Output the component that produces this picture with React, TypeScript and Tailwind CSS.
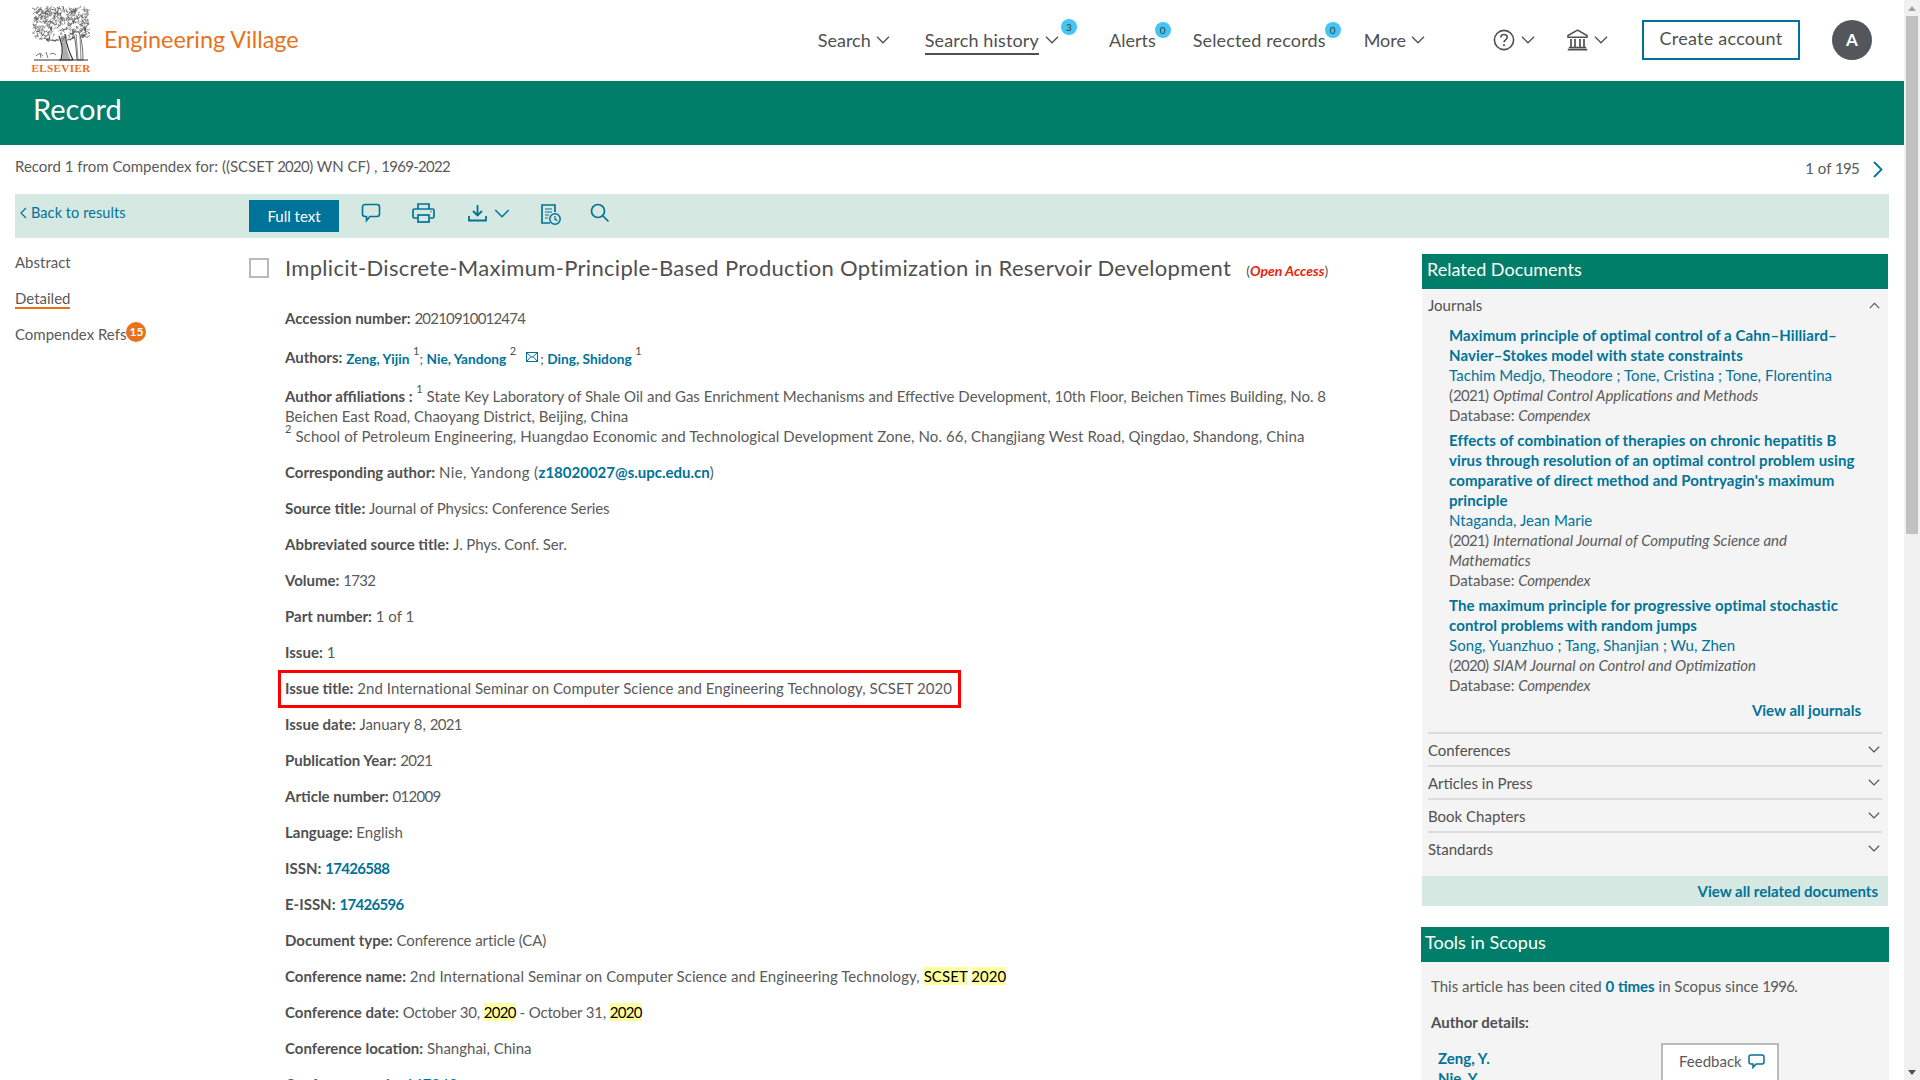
import React from "react";

const F = { fontFamily: '"Lato","Noto Sans",sans-serif' };

function rng(seed: number) {
  let s = seed;
  return () => {
    s = (s * 16807) % 2147483647;
    return s / 2147483647;
  };
}

function crownPath() {
  const r = rng(4242);
  let d = "";
  for (let i = 0; i < 430; i++) {
    const x = 1 + r() * 56;
    const y = 1 + r() * 33;
    const dx = (x - 29) / 29;
    const dy = (y - 17) / 18;
    if (dx * dx * dx * dx + dy * dy * dy * dy > 1) continue;
    if (y > 24 && x > 18 && x < 38 && r() < 0.6) continue;
    const a = r() * 6.28;
    const l = 1.2 + r() * 1.6;
    const cx = x + Math.cos(a + 1) * l;
    const cy = y + Math.sin(a + 1) * l;
    d += `M${x.toFixed(1)} ${y.toFixed(1)}Q${cx.toFixed(1)} ${cy.toFixed(1)} ${(x + Math.cos(a) * l * 1.5).toFixed(1)} ${(y + Math.sin(a) * l * 1.5).toFixed(1)}`;
  }
  return d;
}
const CROWN = crownPath();

function Logo() {
  return (
    <svg width="58" height="56" viewBox="0 0 58 56" className="block">
      <path d={CROWN} fill="none" stroke="#4a4a4a" strokeWidth="0.6" />
      <path d="M27 30c2 6 5 12 2 24M33 28c1 8 2 14 8 26M27 54h14" fill="none" stroke="#333" strokeWidth="1.2" />
      <path d="M29 30c1 8 2 16 1 24h9c-4-8-5-16-5-25z" fill="#6a6a6a" opacity="0.55" />
      <path d="M12 32c4 2 8 3 15 2M44 30c-3 2-6 4-9 4" fill="none" stroke="#444" strokeWidth="0.9" />
      <path d="M41 26c3 8 3 18 4 28h6c0-10-1-20-4-28z" fill="#fff" stroke="#444" strokeWidth="0.8" />
      <path d="M36 30l7-4M44 28l2 26M48 30l1 24" fill="none" stroke="#555" strokeWidth="0.7" />
      <path d="M4 50c3-3 5-3 7 0M14 46l2 6M8 47l1 5M18 48c2-1 4-1 6 1" fill="none" stroke="#555" strokeWidth="0.8" />
      <path d="M2 54h54" stroke="#333" strokeWidth="1.1" />
    </svg>
  );
}

function Chev({ w = 14, h = 8, c = "#505050", up = false }: { w?: number; h?: number; c?: string; up?: boolean }) {
  return (
    <svg width={w} height={h} viewBox="0 0 14 8" fill="none" className="block shrink-0">
      <path d={up ? "M1 7.2 7 1.2l6 6" : "M1 .8l6 6 6-6"} stroke={c} strokeWidth="1.3" />
    </svg>
  );
}

function Badge({ n, cls }: { n: string; cls: string }) {
  return (
    <span className={`absolute w-4 h-4 rounded-full bg-[#44c6f4] text-[#3a3a3a] text-[10px] leading-4 text-center tracking-normal ${cls}`}>
      {n}
    </span>
  );
}

const K = ({ children }: { children: React.ReactNode }) => <span className="font-bold text-[#505050]">{children}</span>;
const L = ({ children, b = true }: { children: React.ReactNode; b?: boolean }) => (
  <span className={`text-[#007398] ${b ? "font-bold" : ""}`}>{children}</span>
);
const N = ({ children }: { children: React.ReactNode }) => <span className="tracking-[-0.7px]">{children}</span>;
const Y = ({ children }: { children: React.ReactNode }) => <span className="bg-[#ffff9f] text-black">{children}</span>;
const Sup = ({ children }: { children: React.ReactNode }) => (
  <sup className="text-[11px] leading-none align-[4px] font-normal text-[#505050]">{children}</sup>
);

function Row({ k, children, cls = "" }: { k: string; children?: React.ReactNode; cls?: string }) {
  return (
    <div className={`mb-4 ${cls}`}>
      <K>{k}</K> {children}
    </div>
  );
}

function Ref({ title, authors, year, src }: { title: string[]; authors: string[]; year: string; src: string[] }) {
  return (
    <div className="mb-[5px]">
      <div className="font-bold text-[#007398] tracking-[0.1px]">
        {title.map((t) => (
          <div key={t}>{t}</div>
        ))}
      </div>
      <div className="text-[#007398] tracking-[0.06px]">{authors.join(" ; ")}</div>
      <div>
        (<N>{year}</N>) <i>{src[0]}</i>
      </div>
      {src[1] && (
        <div>
          <i>{src[1]}</i>
        </div>
      )}
      <div>
        Database: <i className="tracking-[-0.2px]">Compendex</i>
      </div>
    </div>
  );
}

function Section({ t }: { t: string }) {
  return (
    <div className="h-[33px] border-t-2 border-[#dcdcdc] flex items-center justify-between pr-[2px] text-[#505050]">
      <span>{t}</span>
      <Chev w={12} h={7} />
    </div>
  );
}

export default function App() {
  return (
    <div className="h-screen overflow-hidden flex bg-white text-[#5a5a5a] text-[15px] leading-5" style={F}>
      <div className="w-[1904px] shrink-0 relative">
        {/* header */}
        <header className="h-[81px] flex items-center">
          <div className="ml-8 flex flex-col items-center w-[58px] -mt-[1px]">
            <Logo />
            <span className="text-[#e9711c] text-[11px] leading-[11px] font-bold tracking-[0.45px] mt-[1px]" style={{ fontFamily: '"Liberation Serif",serif' }}>
              ELSEVIER
            </span>
          </div>
          <span className="ml-[14px] text-[#e9711c] text-[23.4px] leading-none -mt-[2px]">Engineering Village</span>
          <nav className="ml-auto flex items-center text-[18px] text-[#505050] h-full relative pr-[32px] pb-[1px]">
            <div className="flex items-center gap-[5px]">
              <span>Search</span>
              <Chev />
            </div>
            <div className="ml-[35px] flex items-center gap-[6px] relative">
              <span className="relative tracking-[0.15px]">
                Search history
                <span className="absolute left-0 right-0 -bottom-[5px] h-[2px] bg-[#505050]" />
              </span>
              <Chev />
              <Badge n="3" cls="-right-[18px] -top-[11px]" />
            </div>
            <div className="ml-[50px] relative">
              Alerts
              <Badge n="0" cls="-right-[15px] -top-[8px]" />
            </div>
            <div className="ml-[37px] relative tracking-[0.15px]">
              Selected records
              <Badge n="0" cls="-right-[15px] -top-[8px]" />
            </div>
            <div className="ml-[38px] flex items-center gap-[5px]">
              <span>More</span>
              <Chev />
            </div>
            <div className="ml-[68px] flex items-center gap-[6px]">
              <svg width="22" height="22" viewBox="0 0 22 22" fill="none" stroke="#505050" strokeWidth="1.6">
                <circle cx="11" cy="11" r="9.6" />
                <path d="M7.8 8.5c0-1.9 1.4-3 3.2-3s3.2 1.1 3.2 2.8c0 2.6-3.2 2.5-3.2 5" />
                <path d="M11 15.2v1.8" strokeWidth="1.9" />
              </svg>
              <Chev />
            </div>
            <div className="ml-[32px] flex items-center gap-[6px]">
              <svg width="21" height="22" viewBox="0 0 21 22" fill="none" stroke="#505050" strokeWidth="1.5">
                <path d="M10.5 1.2 1 6.5v1.8h19V6.5z" />
                <path d="M4 10v8M8 10v8M13 10v8M17 10v8" strokeWidth="1.7" />
                <path d="M1.8 18.5h17.4M.8 20.7h19.4" strokeWidth="1.7" />
              </svg>
              <Chev />
            </div>
            <button className="ml-[34px] w-[158px] h-10 border-2 border-[#007398] text-[18px] text-[#505050] tracking-[0.25px] pb-[4px]">
              Create account
            </button>
            <div className="ml-[32px] w-10 h-10 rounded-full bg-[#53565a] text-white font-bold text-[17px] flex items-center justify-center">A</div>
          </nav>
        </header>

        {/* band */}
        <div className="h-16 bg-[#007e69] text-white text-[29px] flex items-center pl-[33px] pb-2">Record</div>

        {/* info */}
        <div className="h-[49px] flex items-center justify-between pl-[15px] pr-[21px] pb-2">
          <span>
            Record 1 from Compendex for: ((SCSET <N>2020</N>) WN CF) , <N>1969-2022</N>
          </span>
          <div className="flex items-center gap-[14px] pt-1">
            <span>
              1 of <N>195</N>
            </span>
            <svg width="10" height="17" viewBox="0 0 10 17" fill="none" className="mt-[3px]">
              <path d="M1 1l7.5 7.5L1 16" stroke="#007398" strokeWidth="1.8" />
            </svg>
          </div>
        </div>

        {/* toolbar */}
        <div className="mx-[15px] h-[44px] bg-[#d6e8e2] flex items-center">
          <div className="w-[234px] flex items-center pl-[5px] gap-[4px] text-[14.5px] text-[#007398] -mt-[6px]">
            <svg width="7" height="12" viewBox="0 0 7 12" fill="none">
              <path d="M6 1 1 6l5 5" stroke="#007398" strokeWidth="1.2" />
            </svg>
            <span className="tracking-[0.08px]">Back to results</span>
          </div>
          <button className="w-[90px] h-8 bg-[#007398] text-white text-[15px]">Full text</button>
          <svg width="20" height="20" viewBox="0 0 20 20" fill="none" stroke="#007398" strokeWidth="1.6" className="ml-[22px] -mt-[6px]">
            <path d="M4 1.5h12a2.5 2.5 0 0 1 2.5 2.5v7a2.5 2.5 0 0 1-2.5 2.5H9l-3.5 4v-4H4A2.5 2.5 0 0 1 1.5 11V4A2.5 2.5 0 0 1 4 1.5z" />
          </svg>
          <svg width="23" height="20" viewBox="0 0 23 20" fill="none" stroke="#007398" strokeWidth="1.7" className="ml-[31px] -mt-[6px]">
            <path d="M6 6V1h11v5M5 15H2.5A1.5 1.5 0 0 1 1 13.5v-6A1.5 1.5 0 0 1 2.5 6h18A1.5 1.5 0 0 1 22 7.5v6a1.5 1.5 0 0 1-1.5 1.5H18" />
            <rect x="6" y="12" width="11" height="7" />
            <path d="M18.5 8.5h1" />
          </svg>
          <svg width="19" height="18" viewBox="0 0 19 18" fill="none" stroke="#007398" strokeWidth="1.8" className="ml-[33px] -mt-[6px]">
            <path d="M9.5 1v10M5 7l4.5 4.5L14 7M1 12v4.5h17V12" />
          </svg>
          <div className="ml-[7px] -mt-[6px]">
            <Chev w={16} h={9} c="#007398" />
          </div>
          <svg width="20" height="22" viewBox="0 0 20 22" fill="none" stroke="#007398" strokeWidth="1.5" className="ml-[31px] -mt-[2px]">
            <path d="M9 19H1V1h13v7" strokeWidth="1.7" />
            <path d="M4 5h7M4 8h7M4 11h4M4 14h3" strokeWidth="1.2" />
            <circle cx="14" cy="15" r="5.2" />
            <path d="M14 12v3.4l2.4 1.2" strokeWidth="1.2" />
          </svg>
          <svg width="20" height="20" viewBox="0 0 20 20" fill="none" stroke="#007398" strokeWidth="1.7" className="ml-[29px] -mt-[6px]">
            <circle cx="8" cy="8" r="6.5" />
            <path d="M13 13l5.5 5.5" />
          </svg>
        </div>

        {/* body */}
        <div className="flex">
          <aside className="w-[249px] shrink-0 pl-[15px] pt-[14px]">
            <div className="h-5">Abstract</div>
            <div className="mt-4 h-5 w-fit relative">
              Detailed
              <span className="absolute left-0 right-0 bottom-[-1px] h-[2px] bg-[#e9711c]" />
            </div>
            <div className="mt-4 h-5 flex items-start">
              <span>Compendex Refs</span>
              <span className="w-[20px] h-[20px] rounded-full bg-[#e9711c] text-white text-[12px] font-bold leading-5 text-center -mt-[2px]">15</span>
            </div>
          </aside>

          <main className="w-[1172px] shrink-0 pt-[20px] pr-[20px]">
            <div className="flex items-center h-5">
              <span className="w-[20px] h-[20px] border-[2.5px] border-[#bbbbbb] shrink-0" />
              <span className="ml-4 text-[22px] tracking-[0.31px] whitespace-nowrap text-[#505050]">
                Implicit-Discrete-Maximum-Principle-Based Production Optimization in Reservoir Development
              </span>
              <span className="ml-[15px] mt-[5px] text-[14px] whitespace-nowrap">
                (
                <b>
                  <i className="text-[#e9220c]">Open Access</i>
                </b>
                )
              </span>
            </div>
            <div className="ml-[36px] mt-[30px]">
              <Row k="Accession number:">
                <span className="tracking-[-0.8px]">20210910012474</span>
              </Row>
              <Row k="Authors:" cls="mt-[19px]">
                <span className="text-[13.7px] relative top-[1px]">
                  <L>Zeng, Yijin</L> <Sup>1</Sup>; <L>Nie, Yandong</L> <Sup>2</Sup>
                  <svg width="12" height="10" viewBox="0 0 12 10" fill="none" stroke="#007398" strokeWidth="1" className="inline-block ml-[10px] mr-[2px] align-[2px]">
                    <rect x=".5" y=".5" width="11" height="9" />
                    <path d="M.5.5 6 5.5 11.5.5M.5 9.5 5 4.5M11.5 9.5 7 4.5" />
                  </svg>
                  ; <L>Ding, Shidong</L> <Sup>1</Sup>
                </span>
              </Row>
              <div className="mb-4 mt-[18px] w-[1060px]">
                <K>Author affiliations :</K> <Sup>1</Sup> State Key Laboratory of Shale Oil and Gas Enrichment Mechanisms and Effective Development, 10th Floor, Beichen Times Building, No. 8
                <br />
                Beichen East Road, Chaoyang District, Beijing, China
                <br />
                <span className="tracking-[0.1px]">
                  <Sup>2</Sup> School of Petroleum Engineering, Huangdao Economic and Technological Development Zone, No. 66, Changjiang West Road, Qingdao, Shandong, China
                </span>
              </div>
              <Row k="Corresponding author:">
                <span className="tracking-[0.4px]">Nie, Yandong (</span>
                <L>z18020027@s.upc.edu.cn</L>)
              </Row>
              <Row k="Source title:">
                <span className="tracking-[-0.1px]">Journal of Physics: Conference Series</span>
              </Row>
              <Row k="Abbreviated source title:">
                <span className="tracking-[-0.1px]">J. Phys. Conf. Ser.</span>
              </Row>
              <Row k="Volume:">
                <N>1732</N>
              </Row>
              <Row k="Part number:">1 of 1</Row>
              <Row k="Issue:">1</Row>
              <div className="mb-4 relative">
                <K>Issue title:</K> <span className="tracking-[0.05px]">2nd International Seminar on Computer Science and Engineering Technology, SCSET 2020</span>
                <span className="absolute -left-[7px] -top-[8px] -bottom-[10px] w-[683px] border-[3px] border-[#ff0000]" />
              </div>
              <Row k="Issue date:">
                January 8, <N>2021</N>
              </Row>
              <Row k="Publication Year:">
                <N>2021</N>
              </Row>
              <Row k="Article number:">
                <N>012009</N>
              </Row>
              <Row k="Language:">English</Row>
              <Row k="ISSN:">
                <N>
                  <L>17426588</L>
                </N>
              </Row>
              <Row k="E-ISSN:">
                <N>
                  <L>17426596</L>
                </N>
              </Row>
              <Row k="Document type:">
                <span className="tracking-[-0.1px]">Conference article (CA)</span>
              </Row>
              <Row k="Conference name:">
                <span className="tracking-[0.07px]">
                  2nd International Seminar on Computer Science and Engineering Technology, <Y>SCSET</Y> <Y>2020</Y>
                </span>
              </Row>
              <Row k="Conference date:">
                <span className="tracking-[-0.15px]">
                  October 30, <Y><N>2020</N></Y> - October 31, <Y><N>2020</N></Y>
                </span>
              </Row>
              <Row k="Conference location:">Shanghai, China</Row>
              <Row k="Conference code:">
                <L b={false}>167848</L>
              </Row>
            </div>
          </main>

          <aside className="w-[468px] shrink-0 pt-4">
            <div className="mx-[1px]">
              <div className="h-[35px] bg-[#007e69] text-white text-[18px] flex items-center pl-[5px] pb-[5px]">Related Documents</div>
              <div className="bg-[#f4f4f4] px-[6px] pt-[6px]">
                <div className="h-5 flex items-center justify-between pr-[2px] mb-[10px] text-[#505050]">
                  <span>Journals</span>
                  <Chev w={11} h={7} up />
                </div>
                <div className="pl-[21px] pr-[24px]">
                  <Ref
                    title={["Maximum principle of optimal control of a Cahn–Hilliard–", "Navier–Stokes model with state constraints"]}
                    authors={["Tachim Medjo, Theodore", "Tone, Cristina", "Tone, Florentina"]}
                    year="2021"
                    src={["Optimal Control Applications and Methods"]}
                  />
                  <Ref
                    title={["Effects of combination of therapies on chronic hepatitis B", "virus through resolution of an optimal control problem using", "comparative of direct method and Pontryagin's maximum", "principle"]}
                    authors={["Ntaganda, Jean Marie"]}
                    year="2021"
                    src={["International Journal of Computing Science and", "Mathematics"]}
                  />
                  <Ref
                    title={["The maximum principle for progressive optimal stochastic", "control problems with random jumps"]}
                    authors={["Song, Yuanzhuo", "Tang, Shanjian", "Wu, Zhen"]}
                    year="2020"
                    src={["SIAM Journal on Control and Optimization"]}
                  />
                </div>
                <div className="text-right pr-[21px] text-[#007398] font-bold h-[32px]">View all journals</div>
                <Section t="Conferences" />
                <Section t="Articles in Press" />
                <Section t="Book Chapters" />
                <Section t="Standards" />
                <div className="h-[12px]" />
              </div>
              <div className="h-[30px] bg-[#d6e8e2] flex items-center justify-end pr-[10px] text-[#007398] font-bold">View all related documents</div>
            </div>
            <div className="mt-[21px] h-[35px] bg-[#007e69] text-white text-[18px] flex items-center pl-[4px] pb-[5px]">Tools in Scopus</div>
            <div className="bg-[#f4f4f4] px-[10px] pt-[14px] h-[200px]">
              <div>
                This article has been cited <L>0 times</L> in Scopus since <N>1996</N>.
              </div>
              <div className="mt-[16px] font-bold text-[#505050]">Author details:</div>
              <div className="mt-[16px] pl-[7px] font-bold text-[#007398]">
                <div>Zeng, Y.</div>
                <div>Nie, Y.</div>
              </div>
            </div>
          </aside>
        </div>

        <div className="absolute left-[1661px] top-[1043px] w-[118px] h-[60px] bg-white border-2 border-[#bbbbbb] pl-[16px] pt-[6px]">
          <div className="flex items-center gap-[6px]">
            <span>Feedback</span>
            <svg width="17" height="15" viewBox="0 0 17 15" fill="none" stroke="#007398" strokeWidth="1.5">
              <path d="M3 1h11a2 2 0 0 1 2 2v5a2 2 0 0 1-2 2H8l-3 3.5V10H3a2 2 0 0 1-2-2V3a2 2 0 0 1 2-2z" />
            </svg>
          </div>
        </div>
      </div>

      {/* scrollbar */}
      <div className="w-4 shrink-0 bg-[#f1f1f1] h-full flex flex-col items-center justify-between relative">
        <div className="h-4 flex items-center justify-center">
          <span className="w-0 h-0 border-x-[4px] border-x-transparent border-b-[5px] border-b-[#a3a3a3]" />
        </div>
        <div className="absolute top-4 left-[2px] w-3 h-[518px] bg-[#c1c1c1]" />
        <div className="h-4 flex items-center justify-center">
          <span className="w-0 h-0 border-x-[4px] border-x-transparent border-t-[5px] border-t-[#505050]" />
        </div>
      </div>
    </div>
  );
}
